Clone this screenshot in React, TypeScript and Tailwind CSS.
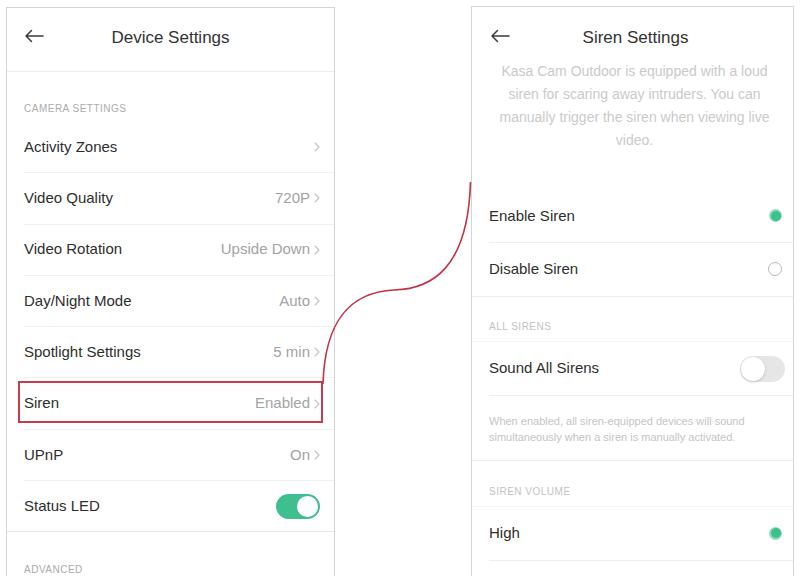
import React from "react";

const font = { fontFamily: '"Liberation Sans", Arial, sans-serif' };

function BackArrow() {
  return (
    <svg width="20" height="14" viewBox="0 0 20 14" fill="none">
      <path d="M19 7H2M7.5 1.5L2 7l5.5 5.5" stroke="#3a3a3a" strokeWidth="1.5" strokeLinecap="round" strokeLinejoin="round" />
    </svg>
  );
}

function Chevron() {
  return (
    <svg width="6" height="10" viewBox="0 0 6 10" fill="none" className="ml-[4px]">
      <path d="M1 1l4 4-4 4" stroke="#c4c4c4" strokeWidth="1.1" strokeLinecap="round" strokeLinejoin="round" />
    </svg>
  );
}

function Toggle({ on }: { on: boolean }) {
  return on ? (
    <div className="w-[44px] h-[25px] rounded-full bg-[#3fbf8f] flex items-center justify-end pr-[2px]">
      <div className="w-[21px] h-[21px] rounded-full bg-white" />
    </div>
  ) : (
    <div className="w-[45px] h-[26px] rounded-full bg-[#e6e6e6] flex items-center pl-[1px]">
      <div className="w-[24px] h-[24px] rounded-full bg-white shadow-[0_1px_3px_rgba(0,0,0,0.18)]" />
    </div>
  );
}

function Radio({ on }: { on: boolean }) {
  return on ? (
    <div className="w-[13px] h-[13px] rounded-full bg-[#8fdcbf] flex items-center justify-center">
      <div className="w-[10px] h-[10px] rounded-full bg-[#3ebf8e]" />
    </div>
  ) : (
    <div className="w-[14px] h-[14px] rounded-full border border-[#b8b8b8] bg-white" />
  );
}

type LeftRow = { label: string; value?: string; toggle?: boolean; boxed?: boolean; last?: boolean };

const leftRows: LeftRow[] = [
  { label: "Activity Zones", value: "" },
  { label: "Video Quality", value: "720P" },
  { label: "Video Rotation", value: "Upside Down" },
  { label: "Day/Night Mode", value: "Auto" },
  { label: "Spotlight Settings", value: "5 min" },
  { label: "Siren", value: "Enabled", boxed: true },
  { label: "UPnP", value: "On" },
  { label: "Status LED", toggle: true, last: true },
];

function DeviceSettings() {
  return (
    <div className="ml-[6px] mt-[7px] w-[329px] min-h-[569px] border border-b-0 border-[#d4d4d4] bg-white shrink-0">
      <div className="h-[64px] pb-[3px] border-b border-[#ececec] flex items-center relative">
        <div className="absolute left-[17px] top-[21px]">
          <BackArrow />
        </div>
        <div className="flex-1 text-center text-[17px] text-[#333]">Device Settings</div>
      </div>
      <div className="h-[50px] flex items-end pl-[17px] pb-[7px]">
        <span className="text-[10px] leading-[12px] tracking-[0.5px] text-[#ababab]">CAMERA SETTINGS</span>
      </div>
      {leftRows.map((r) => (
        <div key={r.label} className={`h-[51.3px] relative ${r.last ? "" : "pl-[17px]"}`}>
          <div
            className={`h-full flex items-center pr-[14px] border-b ${
              r.last ? "pl-[17px] border-[#e8e8e8]" : "border-[#f0f0f0]"
            }`}
          >
            <span className="flex-1 text-[15px] text-[#2e2e2e]">{r.label}</span>
            {r.toggle ? (
              <Toggle on />
            ) : (
              <span className="flex items-center text-[15px] text-[#a3a3a3]">
                {r.value}
                <Chevron />
              </span>
            )}
          </div>
          {r.boxed && (
            <div className="absolute left-[11px] top-[3px] w-[305px] h-[42px] border-2 border-[#c93a4c]" />
          )}
        </div>
      ))}
      <div className="h-[51px] flex items-end pl-[17px] pb-[7px]">
        <span className="text-[10px] leading-[12px] tracking-[0.5px] text-[#ababab]">ADVANCED</span>
      </div>
    </div>
  );
}

function SirenRow({ label, right, divider }: { label: string; right: React.ReactNode; divider: "inset" | "full" }) {
  return (
    <div className={`h-[53.5px] ${divider === "inset" ? "pl-[17px]" : ""}`}>
      <div
        className={`h-full flex items-center pr-[11px] border-b border-[#efefef] ${
          divider === "full" ? "pl-[17px]" : ""
        }`}
      >
        <span className="flex-1 text-[15px] text-[#2e2e2e]">{label}</span>
        {right}
      </div>
    </div>
  );
}

function SectionLabel({ text, h }: { text: string; h: string }) {
  return (
    <div className={`${h} flex items-end pl-[17px] pb-[8px] border-b border-[#f3f3f3]`}>
      <span className="text-[10px] leading-[12px] tracking-[0.5px] text-[#c2c2c2]">{text}</span>
    </div>
  );
}

function SirenSettings() {
  return (
    <div className="ml-[136px] mt-[6px] w-[323px] min-h-[570px] border border-b-0 border-[#d4d4d4] bg-white shrink-0">
      <div className="h-[53px] pt-[8px] flex items-center relative">
        <div className="absolute left-[18px] top-[22px]">
          <BackArrow />
        </div>
        <div className="flex-1 text-center text-[17px] text-[#333] pl-[6px]">Siren Settings</div>
      </div>
      <p className="text-center text-[14px] leading-[23px] text-[#cacaca] px-[10px] pl-[14px]">
        Kasa Cam Outdoor is equipped with a loud
        <br />
        siren for scaring away intruders. You can
        <br />
        manually trigger the siren when viewing live
        <br />
        video.
      </p>
      <div className="h-[37.5px]" />
      <SirenRow label="Enable Siren" right={<Radio on />} divider="inset" />
      <SirenRow label="Disable Siren" right={<Radio on={false} />} divider="full" />
      <SectionLabel text="ALL SIRENS" h="h-[45.5px]" />
      <div className="h-[54px] pl-[17px]">
        <div className="h-full flex items-center pr-[8px] border-b border-[#efefef]">
          <span className="flex-1 text-[15px] text-[#2e2e2e]">Sound All Sirens</span>
          <Toggle on={false} />
        </div>
      </div>
      <div className="h-[65px] pl-[17px] pr-[20px] pt-[17px] border-b border-[#ececec]">
        <p className="text-[11px] leading-[16px] text-[#c4c4c4]">
          When enabled, all siren-equipped devices will sound
          <br />
          simultaneously when a siren is manually activated.
        </p>
      </div>
      <SectionLabel text="SIREN VOLUME" h="h-[46px]" />
      <SirenRow label="High" right={<Radio on />} divider="inset" />
    </div>
  );
}

export default function App() {
  return (
    <div className="relative w-[804px] h-[576px] overflow-hidden bg-white flex items-start" style={font}>
      <DeviceSettings />
      <SirenSettings />
      {/* callout line from the Siren row to the siren screen */}
      <svg className="absolute inset-0 pointer-events-none" width="804" height="576" viewBox="0 0 804 576">
        <path
          d="M323 384 C325 318 352 292 394 290 C432 289 468 268 470.5 182"
          fill="none"
          stroke="#c23447"
          strokeWidth="1.6"
        />
      </svg>
    </div>
  );
}
